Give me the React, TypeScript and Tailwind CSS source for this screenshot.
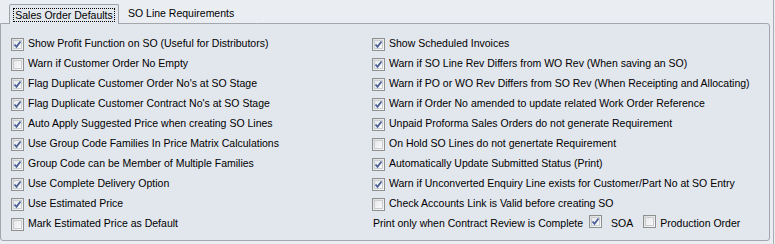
import React from "react";

type Item = { label: string; checked: boolean };

const left: Item[] = [
  { label: "Show Profit Function on SO (Useful for Distributors)", checked: true },
  { label: "Warn if Customer Order No Empty", checked: false },
  { label: "Flag Duplicate Customer Order No's at SO Stage", checked: true },
  { label: "Flag Duplicate Customer Contract No's at SO Stage", checked: true },
  { label: "Auto Apply Suggested Price when creating SO Lines", checked: true },
  { label: "Use Group Code Families In Price Matrix Calculations", checked: true },
  { label: "Group Code can be Member of Multiple Families", checked: true },
  { label: "Use Complete Delivery Option", checked: true },
  { label: "Use Estimated Price", checked: true },
  { label: "Mark Estimated Price as Default", checked: false },
];

const right: Item[] = [
  { label: "Show Scheduled Invoices", checked: true },
  { label: "Warn if SO Line Rev Differs from WO Rev (When saving an SO)", checked: true },
  { label: "Warn if PO or WO Rev Differs from SO Rev (When Receipting and Allocating)", checked: true },
  { label: "Warn if Order No amended to update related Work Order Reference", checked: true },
  { label: "Unpaid Proforma Sales Orders do not generate Requirement", checked: true },
  { label: "On Hold SO Lines do not genertate Requirement", checked: false },
  { label: "Automatically Update Submitted Status (Print)", checked: true },
  { label: "Warn if Unconverted Enquiry Line exists for Customer/Part No at SO Entry", checked: true },
  { label: "Check Accounts Link is Valid before creating SO", checked: false },
];

function Box({ checked }: { checked: boolean }) {
  return (
    <span className="relative inline-block w-[13px] h-[13px] shrink-0 border border-[#8e8f8f] bg-gradient-to-br from-[#dcdcdc] to-[#fbfbfb]">
      <span className="absolute inset-[1px] border border-[#c8cdd2] bg-gradient-to-br from-[#e6e8ea] to-[#fafafa]" />
      {checked && (
        <svg className="absolute left-[1px] top-[1px]" width="9" height="9" viewBox="0 0 9 9">
          <path d="M1.5 4.5 L3.5 6.8 L7.5 1.5" stroke="#4a5f97" strokeWidth="1.8" fill="none" />
        </svg>
      )}
    </span>
  );
}

function Row({ item }: { item: Item }) {
  return (
    <div className="h-[20px] flex items-center gap-[4px]">
      <Box checked={item.checked} />
      <span className="whitespace-nowrap">{item.label}</span>
    </div>
  );
}

export default function App() {
  return (
    <div
      className="w-[775px] h-[244px] bg-[#eaedf2] text-[10.5px] text-black overflow-hidden pr-[1px]"
      style={{ fontFamily: '"Liberation Sans", Arial, sans-serif' }}
    >
      <div className="w-[774px] h-[244px] border-r border-[#a9adb3]">
        {/* tab strip */}
        <div className="h-[23px] flex items-end pl-[9px]">
          <div className="h-[20px] w-[110px] border border-b-0 border-[#9da2a8] rounded-t-[2px] bg-[#e3e7ee] flex items-center justify-center relative top-[1px]">
            <span className="border border-dotted border-black px-[1px] leading-[12px]">Sales Order Defaults</span>
          </div>
          <div className="h-[19px] pl-[9px] flex items-center">SO Line Requirements</div>
        </div>

        {/* panel */}
        <div className="w-[770px] h-[218px] border border-[#a3a7ad] rounded-b-[3px] rounded-tr-[3px] bg-[#e2e6ed] pt-[10px] grid grid-cols-[361px_1fr] pl-[10px]">
          <div className="flex flex-col">
            {left.map((i) => (
              <Row key={i.label} item={i} />
            ))}
          </div>
          <div className="flex flex-col">
            {right.map((i) => (
              <Row key={i.label} item={i} />
            ))}
            <div className="h-[20px] flex items-center">
              <span className="whitespace-nowrap ml-[1px]">Print only when Contract Review is Complete</span>
              <span className="ml-[6px]"><Box checked={true} /></span>
              <span className="ml-[9px]">SOA</span>
              <span className="ml-[10px]"><Box checked={false} /></span>
              <span className="ml-[4px]">Production Order</span>
            </div>
          </div>
        </div>
      </div>
    </div>
  );
}
